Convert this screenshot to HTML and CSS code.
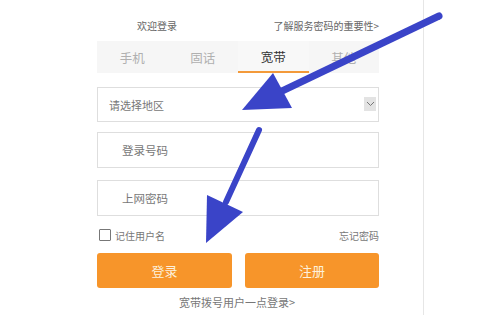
FILE: index.html
```html
<!DOCTYPE html>
<html lang="zh">
<head>
<meta charset="utf-8">
<link rel="stylesheet" href="styles.css">
</head>
<body>
<div class="stage">
  <div class="page">
    <div class="login">
      <div class="head">
        <span class="welcome">欢迎登录</span>
        <span class="learn">了解服务密码的重要性&gt;</span>
      </div>
      <div class="tabs">
        <div class="tab">手机</div>
        <div class="tab">固话</div>
        <div class="tab active">宽带</div>
        <div class="tab">其他</div>
      </div>
      <div class="field select">
        <span class="ph">请选择地区</span>
        <span class="drop"><svg width="9" height="6" viewBox="0 0 9 6"><path d="M1 1 L4.5 4.5 L8 1" fill="none" stroke="#777" stroke-width="1"/></svg></span>
      </div>
      <div class="field input first"><span class="ph">登录号码</span></div>
      <div class="field input second"><span class="ph">上网密码</span></div>
      <div class="opts">
        <label class="remember"><span class="box"></span>记住用户名</label>
        <span class="forgot">忘记密码</span>
      </div>
      <div class="btns">
        <div class="btn">登录</div>
        <div class="btn">注册</div>
      </div>
      <div class="quick">宽带拨号用户一点登录&gt;</div>
    </div>
  </div>
  <svg class="arrows" width="486" height="315" viewBox="0 0 486 315">
    <line x1="439" y1="16" x2="280" y2="92" stroke="#3a44c8" stroke-width="7" stroke-linecap="round"/>
    <polygon points="242,110 273,73 292,108" fill="#3a44c8"/>
    <line x1="259" y1="130" x2="226" y2="202" stroke="#3a44c8" stroke-width="6" stroke-linecap="round"/>
    <polygon points="206,243 207,195 243,212" fill="#3a44c8"/>
  </svg>
</div>
</body>
</html>
```
FILE: styles.css
```css
* { box-sizing: border-box; }
html, body { margin: 0; padding: 0; background: #fff; }
body { font-family: "Noto Sans CJK SC", "Liberation Sans", sans-serif; color: #666; }
.stage {
  position: relative;
  width: 486px;
  height: 315px;
  overflow: hidden;
}
.page {
  width: 424px;
  height: 315px;
  border-right: 1px solid #e6e6e6;
}
.login { margin-left: 97px; width: 282px; padding-top: 16px; }
.head {
  display: flex;
  justify-content: space-between;
  align-items: center;
  height: 18px;
  font-size: 10px;
  color: #666;
  padding-left: 40px;
}
.tabs {
  display: flex;
  margin-top: 7px;
  height: 32px;
  background: #f6f6f6;
}
.tab {
  flex: 1;
  display: flex;
  align-items: center;
  justify-content: center;
  font-size: 12.5px;
  color: #b0b0b0;
}
.tab.active { color: #333; border-bottom: 2px solid #f39a3a; background: #f8f8f8; }
.field {
  border: 1px solid #dedede;
  display: flex;
  align-items: center;
  font-size: 11.5px;
  color: #777;
}
.select { margin-top: 14px; height: 35px; padding-left: 11px; justify-content: space-between; padding-right: 2px; font-size: 11px; }
.drop {
  width: 12px;
  height: 14px;
  background: #e3e3e3;
  display: flex;
  align-items: center;
  justify-content: center;
  margin-top: -2px;
}
.input { height: 36px; padding-left: 24px; }
.first { margin-top: 10px; }
.second { margin-top: 12px; }
.opts {
  display: flex;
  justify-content: space-between;
  align-items: center;
  margin-top: 13px;
  height: 12px;
  font-size: 10px;
  color: #777;
}
.remember { display: flex; align-items: center; padding-left: 2px; }
.box {
  width: 12px;
  height: 12px;
  border: 1px solid #777;
  border-radius: 1px;
  margin-right: 4px;
}
.btns {
  display: flex;
  justify-content: space-between;
  margin-top: 12px;
}
.btn {
  width: 135px;
  height: 35px;
  background: #f7952a;
  border-radius: 3px;
  color: #fdf1dc;
  font-size: 13px;
  display: flex;
  align-items: center;
  justify-content: center;
}
.btn + .btn { width: 134px; }
.quick {
  margin-top: 7px;
  text-align: center;
  font-size: 11px;
  color: #777;
  line-height: 14px;
  padding-right: 2px;
}
.arrows { position: absolute; left: 0; top: 0; pointer-events: none; }
```
